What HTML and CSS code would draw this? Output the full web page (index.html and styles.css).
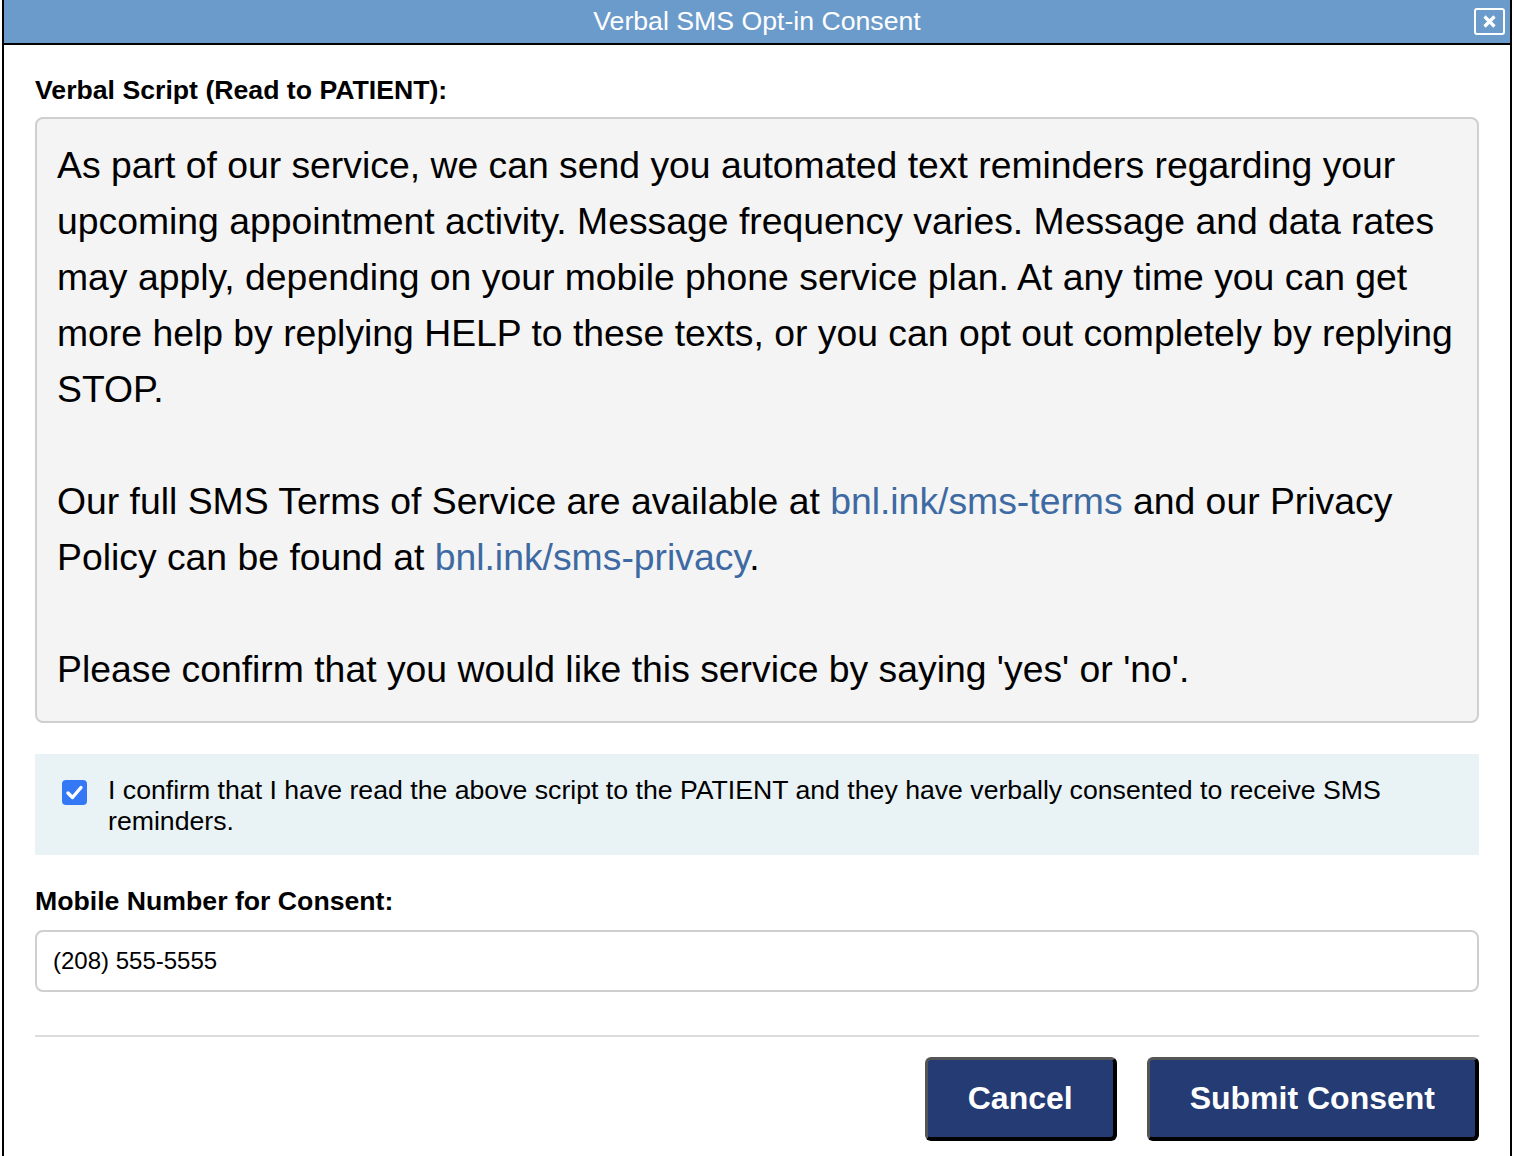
FILE: index.html
```html
<!DOCTYPE html>
<html lang="en">
<head>
<meta charset="utf-8">
<title>Verbal SMS Opt-in Consent</title>
<link rel="stylesheet" href="styles.css">
</head>
<body>
<div class="dialog">
  <div class="titlebar">
    <span class="title">Verbal SMS Opt-in Consent</span>
    <button class="close" type="button" aria-label="Close">
      <svg width="15" height="15" viewBox="0 0 15 15"><path d="M2.5 2.5 L12.5 12.5 M12.5 2.5 L2.5 12.5" stroke="#fff" stroke-width="3.2" stroke-linecap="butt"/></svg>
    </button>
  </div>
  <div class="content">
    <div class="label">Verbal Script (Read to PATIENT):</div>
    <div class="script">
      <p>As part of our service, we can send you automated text reminders regarding your upcoming appointment activity. Message frequency varies. Message and data rates may apply, depending on your mobile phone service plan. At any time you can get more help by replying HELP to these texts, or you can opt out completely by replying STOP.</p>
      <p>Our full SMS Terms of Service are available at <a href="#">bnl.ink/sms-terms</a> and our Privacy Policy can be found at <a href="#">bnl.ink/sms-privacy</a>.</p>
      <p>Please confirm that you would like this service by saying 'yes' or 'no'.</p>
    </div>
    <label class="confirm">
      <span class="check">
        <svg width="25" height="25" viewBox="0 0 25 25"><path d="M6 13 L10.5 17.5 L19 7.5" fill="none" stroke="#fff" stroke-width="3.4" stroke-linecap="round" stroke-linejoin="round"/></svg>
      </span>
      <span class="confirm-text">I confirm that I have read the above script to the PATIENT and they have verbally consented to receive SMS reminders.</span>
    </label>
    <div class="label label-mobile">Mobile Number for Consent:</div>
    <div class="input">(208) 555-5555</div>
    <div class="divider"></div>
    <div class="actions">
      <button class="btn" type="button">Cancel</button>
      <button class="btn" type="button">Submit Consent</button>
    </div>
  </div>
</div>
</body>
</html>
```
FILE: styles.css
```css
html, body {
  margin: 0;
  padding: 0;
  background: #ffffff;
}
body {
  font-family: "Liberation Sans", Arial, Helvetica, sans-serif;
  color: #000;
  padding-left: 2px;
  width: 1510px;
  height: 1156px;
  overflow: hidden;
}
.dialog {
  width: 1510px;
  box-sizing: border-box;
  border-left: 2px solid #000;
  border-right: 2px solid #000;
  min-height: 1156px;
  background: #fff;
}
.titlebar {
  height: 43px;
  background: #6b9bcb;
  border-bottom: 2px solid #000;
  display: flex;
  align-items: center;
  justify-content: center;
  position: relative;
}
.title {
  color: #fff;
  font-size: 26.67px;
  line-height: 30px;
  margin-top: -1px;
}
.close {
  position: absolute;
  right: 5px;
  top: 8px;
  width: 31px;
  height: 27px;
  box-sizing: border-box;
  border: 2px solid #fff;
  border-radius: 3px;
  background: transparent;
  padding: 0;
  display: flex;
  align-items: center;
  justify-content: center;
}
.close svg { display: block; }
.content {
  padding: 30px 31px 0 31px;
}
.label {
  font-weight: bold;
  font-size: 26.67px;
  line-height: 30px;
}
.script {
  margin-top: 12px;
  border: 2px solid #cfcfcf;
  border-radius: 8px;
  background: #f4f4f4;
  padding: 18px 20px 24px 20px;
  font-size: 37.33px;
  line-height: 56px;
}
.script p {
  margin: 0 0 56px 0;
}
.script p:last-child {
  margin-bottom: 0;
}
.script a {
  color: #3e6aa3;
  text-decoration: none;
}
.confirm {
  margin-top: 31px;
  background: #e9f2f5;
  display: flex;
  align-items: flex-start;
  padding: 21px 60px 18px 27px;
  font-size: 26.67px;
  line-height: 31px;
}
.check {
  flex: none;
  width: 25px;
  height: 25px;
  margin-top: 5px;
  margin-right: 21px;
  background: #3478f6;
  border-radius: 4px;
}
.check svg { display: block; }
.label-mobile {
  margin-top: 31px;
}
.input {
  margin-top: 14px;
  height: 62px;
  box-sizing: border-box;
  border: 2px solid #cfcfcf;
  border-radius: 8px;
  padding: 0 16px;
  display: flex;
  align-items: center;
  font-size: 24px;
  background: #fff;
}
.divider {
  margin-top: 43px;
  height: 2px;
  background: #dddddd;
}
.actions {
  margin-top: 20px;
  display: flex;
  justify-content: flex-end;
  gap: 30px;
}
.btn {
  font-family: "Liberation Sans", Arial, Helvetica, sans-serif;
  font-weight: bold;
  font-size: 32px;
  line-height: 37px;
  color: #fff;
  background: #243b73;
  border-style: solid;
  border-color: #555555 #000000 #000000 #555555;
  border-width: 3px 4px 4px 3px;
  border-radius: 6px;
  padding: 20px 40px;
  height: 84px;
  box-sizing: border-box;
}
```
